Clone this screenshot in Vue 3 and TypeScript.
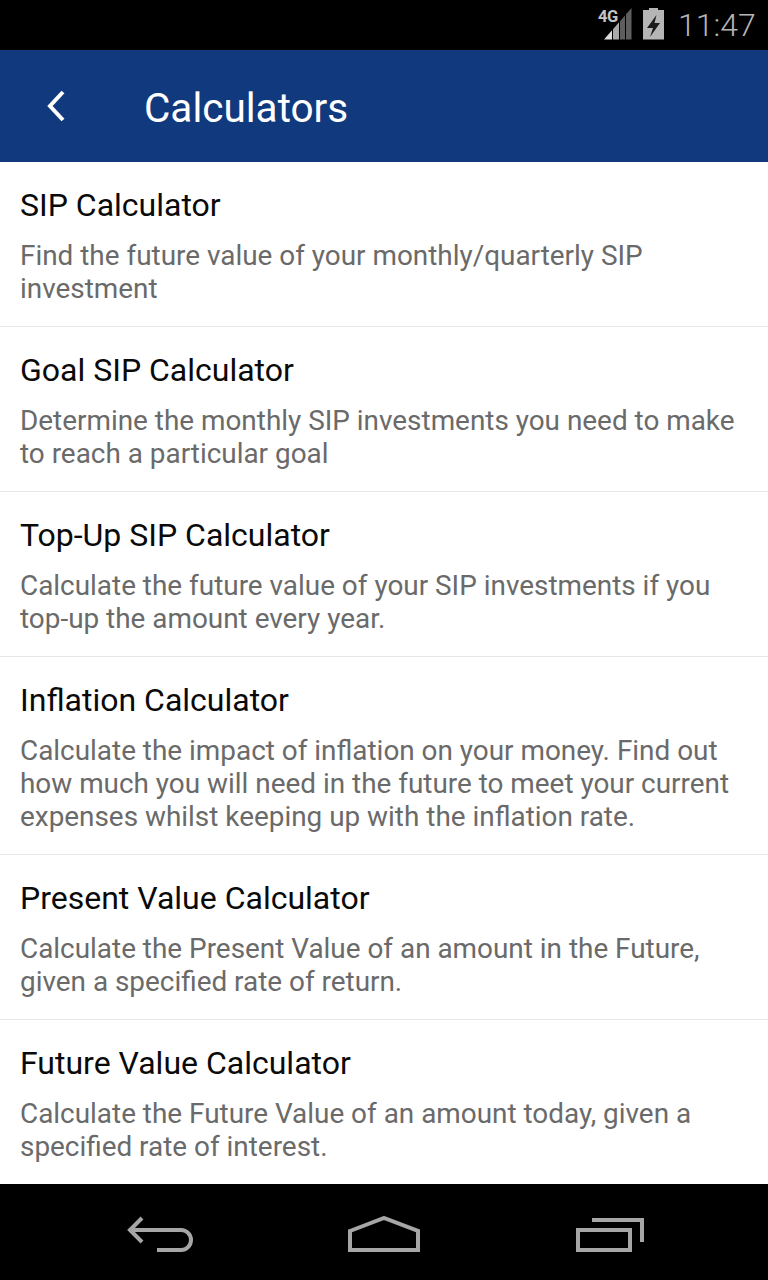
<script setup lang="ts">
interface Item { title: string; lines: string[] }
const items: Item[] = [
  { title: 'SIP Calculator', lines: ['Find the future value of your monthly/quarterly SIP', 'investment'] },
  { title: 'Goal SIP Calculator', lines: ['Determine the monthly SIP investments you need to make', 'to reach a particular goal'] },
  { title: 'Top-Up SIP Calculator', lines: ['Calculate the future value of your SIP investments if you', 'top-up the amount every year.'] },
  { title: 'Inflation Calculator', lines: ['Calculate the impact of inflation on your money. Find out', 'how much you will need in the future to meet your current', 'expenses whilst keeping up with the inflation rate.'] },
  { title: 'Present Value Calculator', lines: ['Calculate the Present Value of an amount in the Future,', 'given a specified rate of return.'] },
  { title: 'Future Value Calculator', lines: ['Calculate the Future Value of an amount today, given a', 'specified rate of interest.'] },
]
</script>

<template>
  <div class="screen">
    <div class="status">
      <span class="net">4G</span>
      <svg class="signal" width="28" height="34" viewBox="0 0 28 34">
        <path d="M0 32.500 L8 23.300 V32.500 Z" fill="#dcdcdc" />
        <path d="M9 22.200 L15 15.300 V32.500 H9 Z" fill="#aaaaaa" />
        <path d="M16 14.200 L21 8.500 V32.500 H16 Z" fill="#5e5e5e" />
        <path d="M22 7.300 L27.500 1 V32.500 H22 Z" fill="#5e5e5e" />
      </svg>
      <svg class="battery" width="22" height="34" viewBox="0 0 22 34">
        <path d="M6 1 H15 V3 H21 V32.500 H0 V3 H6 Z" fill="#b5b5b5" />
        <path d="M13.500 8 L4 21 H10 L7 30 L17 16 H11.500 Z" fill="#1a1a1a" />
      </svg>
      <span class="time">11:47</span>
    </div>
    <header class="bar">
      <svg class="back" width="22" height="34" viewBox="0 0 22 34">
        <path d="M18 3 L5 17 L18 31" fill="none" stroke="#fff" stroke-width="4" />
      </svg>
      <h1>Calculators</h1>
    </header>
    <main class="list">
      <section v-for="item in items" :key="item.title" class="row">
        <h2>{{ item.title }}</h2>
        <p><span v-for="line in item.lines" :key="line" class="line">{{ line }}</span></p>
      </section>
    </main>
    <nav class="nav">
      <svg width="72" height="40" viewBox="0 0 72 40">
        <path d="M17 2 L5 14 L17 26 M5 14 H56 A10 10 0 0 1 56 34 H32" fill="none" stroke="#a6a6a6" stroke-width="4" />
      </svg>
      <svg width="75" height="40" viewBox="0 0 75 40">
        <path d="M3 15 L37 2 L71 15 V34 H3 Z" fill="none" stroke="#a6a6a6" stroke-width="4" />
      </svg>
      <svg width="74" height="40" viewBox="0 0 74 40">
        <path d="M20 4 H70 V26" fill="none" stroke="#a6a6a6" stroke-width="4" />
        <rect x="6" y="14" width="52" height="20" fill="none" stroke="#a6a6a6" stroke-width="4" />
      </svg>
    </nav>
  </div>
</template>

<style scoped>
.screen {
  width: 768px;
  height: 1280px;
  display: flex;
  flex-direction: column;
  background: #fff;
  font-family: Roboto, "Liberation Sans", sans-serif;
  overflow: hidden;
}
.status {
  height: 50px;
  flex: none;
  background: #000;
  display: flex;
  align-items: flex-start;
  color: #b5b5b5;
  padding-left: 604px;
  box-sizing: border-box;
  position: relative;
}
.net {
  position: absolute;
  left: 598px;
  top: 8px;
  font-size: 16.5px;
  line-height: 18px;
  font-weight: 700;
  color: #c4c4c4;
  letter-spacing: -0.5px;
}
.signal { margin-top: 7px; }
.battery { margin: 7px 0 0 11px; }
.time {
  margin: 6px 0 0 13px;
  font-size: 32px;
  line-height: 38px;
  font-weight: 300;
}
.bar {
  height: 112px;
  flex: none;
  background: #113a7e;
  display: flex;
  align-items: center;
  padding-left: 45px;
  box-sizing: border-box;
}
.back { margin-right: 77px; }
h1 {
  margin: 4px 0 0;
  font-size: 40.5px;
  font-weight: 400;
  color: #fff;
}
.list { flex: 1; min-height: 0; }
.row {
  padding: 20px 20px 21px;
  border-bottom: 1px solid #e6e6e6;
}
.row:last-child { border-bottom: 0; }
h2 {
  margin: 0;
  font-size: 32px;
  line-height: 46px;
  font-weight: 400;
  color: #0a0a0a;
}
p {
  margin: 11px 0 0;
  font-size: 27.9px;
  line-height: 33px;
  color: #6a6a6a;
}
.line { display: block; white-space: nowrap; }
.nav {
  height: 96px;
  flex: none;
  background: #000;
  display: flex;
  align-items: flex-start;
  padding: 32px 0 0 125px;
  gap: 150px;
  box-sizing: border-box;
}
</style>
